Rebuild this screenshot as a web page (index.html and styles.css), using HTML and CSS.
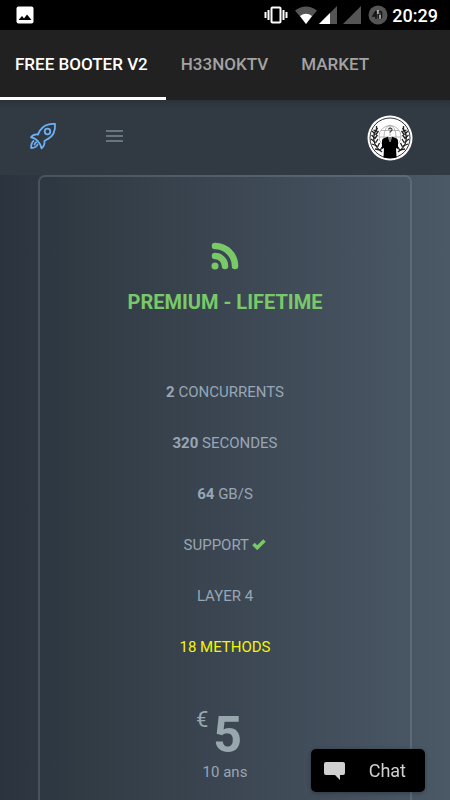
FILE: index.html
```
<!doctype html>
<html lang="en">
	<head>
		<meta charset="utf-8">
		<meta name="viewport" content="width=device-width, initial-scale=1">
		<title>Free Booter V2</title>
		<link rel="stylesheet" href="styles.css">
	</head>
	<body>

		<div class="status">
			<svg class="status-photo" width="18" height="18" viewBox="0 0 18 18"><rect x="0.5" y="0.5" width="17" height="17" rx="2" fill="#fff"/><path d="M2.500 14l3.500-4 2 2.500 3-4 4.500 5.500z" fill="#000"/></svg>
			<svg width="24" height="18" viewBox="0 0 24 18"><rect x="7.500" y="1.500" width="9" height="15" rx="1" fill="none" stroke="#fff" stroke-width="2"/><path d="M4.500 4v10M19.500 4v10M1.500 6v6M22.500 6v6" stroke="#fff" stroke-width="2"/></svg>
			<svg class="status-wifi" width="22" height="18" viewBox="0 0 22 18"><path d="M0 4.500Q11-3.500 22 4.500L11 18z" fill="#555"/><path d="M5 10Q11 5.500 17 10L11 18z" fill="#fff"/></svg>
			<svg class="status-signal" width="18" height="18" viewBox="0 0 18 18"><path d="M0 18L18 0v18z" fill="#555"/><path d="M0 18L11 7v11z" fill="#fff"/></svg>
			<svg class="status-signal2" width="18" height="18" viewBox="0 0 18 18"><path d="M0 18L18 0v18z" fill="#555"/></svg>
			<svg class="status-battery" width="20" height="20" viewBox="0 0 20 20"><circle cx="10" cy="10" r="9.500" fill="#555"/><path d="M8 6l-3 5h4M8 6v8M10.500 7.500v5l1 1h1l1-1v-5l-1-1h-1z" fill="none" stroke="#111" stroke-width="1.500"/><path d="M10 5v4M12 10v4" stroke="#fff"/></svg>
			<span class="status-time">20:29</span>
		</div>

		<nav class="tabs">
			<a class="tab active" href="#booter">FREE BOOTER V2</a>
			<a class="tab" href="#h33noktv">H33NOKTV</a>
			<a class="tab" href="#market">MARKET</a>
		</nav>

		<header class="topbar">
			<a class="logo" href="#home" aria-label="Home">
				<svg width="28" height="28" viewBox="0 0 28 28" fill="none" stroke="#6cb0f5" stroke-width="1.800" stroke-linejoin="round" stroke-linecap="round"><path d="M26 2c-6.500-.6-11.500 1.400-15.200 6.700L9 12.500c-2.800-.5-5.200.4-7 2.800 4.500.5 9 4.500 10.500 11 2.400-2 3.400-4.500 2.900-7.200l3.300-2C24.500 14 26.500 8.500 26 2z"/><circle cx="18.500" cy="9.500" r="2.800"/><path d="M4.500 19c-1.800 1.500-2.500 4-2.300 7 3 0 5.300-1 6.300-3.500M7.300 20.200c-1.200.6-1.700 1.500-1.800 2.400"/></svg>
			</a>
			<button class="menu" type="button" aria-label="Menu">
				<svg width="17" height="12" viewBox="0 0 17 12"><path d="M0 1h17M0 6h17M0 11h17" stroke="#7b8994" stroke-width="1.500"/></svg>
			</button>
			<button class="avatar" type="button" aria-label="Account">
				<svg width="46" height="46" viewBox="0 0 46 46">
					<circle cx="23" cy="23" r="22.500" fill="#fff"/>
					<circle cx="23" cy="23" r="20" fill="none" stroke="#333" stroke-width="1"/>
					<g fill="none" stroke="#999" stroke-width="0.700"><circle cx="23" cy="21.500" r="11"/><ellipse cx="23" cy="21.500" rx="6" ry="11"/><path d="M12 22h22M14 15.500h18M23 10.500v12"/></g>
					<g fill="none" stroke="#222" stroke-width="1.300">
						<path d="M10.500 13C4 21 6 31 15 37M35.500 13C42 21 40 31 31 37"/>
						<path d="M9.500 11v5l-3-1M8 19l-3-3M11.500 16l-3 4M7.500 23l-3-3M10.500 20l-3 4M8 27l-4-3M11 24l-2.500 4M10 31l-5-2M12.500 28l-2 4M13 35l-5-1M15 32l-2 4M36.500 11v5l3-1M38 19l3-3M34.500 16l3 4M38.500 23l3-3M35.500 20l3 4M38 27l4-3M35 24l2.500 4M36 31l5-2M33.500 28l2 4M33 35l5-1M31 32l2 4"/>
					</g>
					<path d="M16.500 42.500L17 33l-2 1v-8c0-1.500.7-2.300 2.500-3l4-1.500h3l4 1.500c1.800.7 2.500 1.500 2.500 3v8l-2-1 .5 9.500q-6.500 1.500-13 0z" fill="#000"/>
					<path d="M21.200 21h3.600l-1 6h-1.600z" fill="#fff"/><path d="M23 22v5" stroke="#000"/>
					<path d="M21.500 14.500c0-1.500 3.500-2 3.500 0 0 1.500-1.800 1.500-1.800 3" fill="none" stroke="#444" stroke-width="1.200"/>
				</svg>
			</button>
		</header>

		<main class="page">
			<section class="plan">
				<svg class="plan-icon" width="28" height="28" viewBox="0 0 28 28"><circle cx="4" cy="24" r="3.500" fill="#7ac969"/><path d="M4 14a10 10 0 0 1 10 10M4 4a20 20 0 0 1 20 20" fill="none" stroke="#7ac969" stroke-width="6.500" stroke-linecap="round"/></svg>
				<h1>PREMIUM - LIFETIME</h1>
				<ul class="features">
					<li><b>2</b> CONCURRENTS</li>
					<li><b>320</b> SECONDES</li>
					<li><b>64</b> GB/S</li>
					<li>SUPPORT <svg width="14" height="11" viewBox="0 0 14 11"><path d="M1.500 5L5.200 8.700 12.500 1.500" fill="none" stroke="#7ac969" stroke-width="3.500"/></svg></li>
					<li>LAYER 4</li>
					<li class="methods">18 METHODS</li>
				</ul>
				<div class="price"><span class="currency">€</span><strong>5</strong></div>
				<p class="period">10 ans</p>
			</section>
		</main>

		<button class="chat" type="button">
			<svg width="21" height="18" viewBox="0 0 21 18"><path d="M2 0h17q2 0 2 2v9q0 2-2 2h-3v5l-5-5H2q-2 0-2-2V2q0-2 2-2z" fill="#d0d0d0"/></svg>
			<span>Chat</span>
		</button>

	</body>
</html>
```
FILE: styles.css
```
* {
	margin: 0;
	padding: 0;
	box-sizing: border-box;
}

body {
	display: flex;
	flex-direction: column;
	min-height: 100vh;
	background: #2b333f;
	font-family: Roboto, sans-serif;
	font-size: 15px;
	color: #98a6b5;
}

button {
	border: 0;
	background: none;
	font: inherit;
	color: inherit;
	cursor: pointer;
}

svg {
	display: block;
}

/* phone status bar */
.status {
	display: flex;
	align-items: center;
	height: 30px;
	padding: 0 12px 0 16px;
	background: #000;
	color: #fff;
}
	.status-photo {
		margin-right: auto;
	}
	.status-wifi {
		margin-left: 7px;
	}
	.status-signal {
		margin-left: 2px;
	}
	.status-signal2 {
		margin-left: 6px;
	}
	.status-battery {
		margin-left: 7px;
	}
	.status-time {
		margin-left: 4px;
		font-size: 18px;
		font-weight: 500;
	}

.tabs {
	display: flex;
	height: 70px;
	background: #212121;
}
.tab {
	padding: 0 18px 0 15px;
	border-bottom: 3px solid transparent;
	line-height: 69px;
	font-size: 17px;
	font-weight: 500;
	color: #a3a3a3;
	text-decoration: none;
}
.tab.active {
	border-color: #fff;
	color: #fff;
}

.topbar {
	display: flex;
	align-items: center;
	height: 75px;
	padding: 0 37px 0 29px;
	background: linear-gradient(to bottom, #2a3139 0, #313a43 8px);
}
.logo {
	padding-bottom: 4px;
}
.menu {
	margin-left: 49px;
	padding-bottom: 4px;
}
.avatar {
	margin-left: auto;
}

.page {
	display: flex;
	flex: 1;
	padding: 0 38px;
	background: linear-gradient(to right, #2b333f 0%, #303b44 18%, #3b4652 50%, #4b5966 100%);
}

.plan {
	flex: 1;
	padding-top: 65px;
	border: 2px solid rgba(152,166,181,0.25);
	border-bottom: 0;
	border-radius: 7px 7px 0 0;
	text-align: center;
}
	.plan-icon {
		margin: 0 auto;
	}
	.plan h1 {
		margin-top: 19px;
		line-height: 26px;
		font-size: 20px;
		font-weight: 700;
		color: #7ac969;
	}
	.features {
		margin-top: 52px;
		list-style: none;
	}
	.features li {
		line-height: 51px;
	}
	.features svg {
		display: inline-block;
	}
	.features .methods {
		color: #f5f500;
	}

.price {
	display: flex;
	justify-content: center;
	gap: 5px;
	margin-top: 34px;
	padding-right: 12px;
	color: #98a6ad;
}
	.currency {
		line-height: 26px;
		font-size: 22px;
	}
	.price strong {
		line-height: 56px;
		font-size: 50px;
	}
.period {
	line-height: 18px;
}

.chat {
	position: fixed;
	right: 25px;
	bottom: 8px;
	display: flex;
	align-items: center;
	gap: 24px;
	height: 43px;
	padding: 0 19px 0 13px;
	border-radius: 5px;
	background: #000;
	box-shadow: 0 1px 4px rgba(0,0,0,0.3);
	font-size: 18px;
	color: #d0d0d0;
}
```
